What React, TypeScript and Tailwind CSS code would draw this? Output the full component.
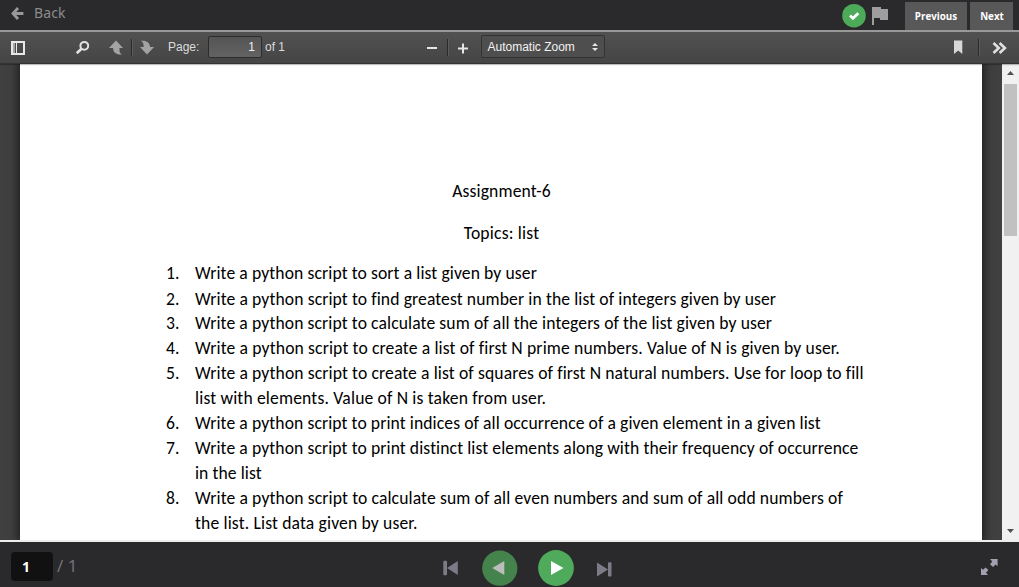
import React from 'react';

type Line = { text: string; cls: string };
type Item = { n: number; lines: Line[] };

const items: Item[] = [
  { n: 1, lines: [{ text: 'Write a python script to sort a list given by user', cls: 'h-[26px] tracking-[0.1px]' }] },
  { n: 2, lines: [{ text: 'Write a python script to find greatest number in the list of integers given by user', cls: 'h-6 tracking-[0.11px]' }] },
  { n: 3, lines: [{ text: 'Write a python script to calculate sum of all the integers of the list given by user', cls: 'h-[25px] tracking-[0.105px]' }] },
  { n: 4, lines: [{ text: 'Write a python script to create a list of first N prime numbers. Value of N is given by user.', cls: 'h-[25px] tracking-[0.138px]' }] },
  {
    n: 5,
    lines: [
      { text: 'Write a python script to create a list of squares of first N natural numbers. Use for loop to fill', cls: 'h-[25px] tracking-[0.118px]' },
      { text: 'list with elements. Value of N is taken from user.', cls: 'h-[25px] tracking-[0.16px]' },
    ],
  },
  { n: 6, lines: [{ text: 'Write a python script to print indices of all occurrence of a given element in a given list', cls: 'h-[25px] tracking-[0.095px]' }] },
  {
    n: 7,
    lines: [
      { text: 'Write a python script to print distinct list elements along with their frequency of occurrence', cls: 'h-[25px] tracking-[0.097px]' },
      { text: 'in the list', cls: 'h-[25px] tracking-[0.08px]' },
    ],
  },
  {
    n: 8,
    lines: [
      { text: 'Write a python script to calculate sum of all even numbers and sum of all odd numbers of', cls: 'h-[25px] tracking-[0.12px]' },
      { text: 'the list. List data given by user.', cls: 'h-[25px] tracking-[0.15px]' },
    ],
  },
];

function Separator() {
  return <div className="h-[17px] w-0.5 border-l border-r border-l-[#2a2a2a] border-r-[#5c5c5c]" />;
}

function TopBar() {
  return (
    <header className="flex h-[30px] shrink-0 items-start justify-between bg-[#2a2a2c]">
      <button className="flex h-[27px] items-center pl-[11px] text-[14px] text-[#8c8c8c]">
        <svg width="13" height="13" viewBox="0 0 13 13" fill="none" stroke="#999" strokeWidth="2.8">
          <path d="M7 1 L2 6.5 L7 12 M2.5 6.5 H12.4" />
        </svg>
        <span className="-mt-0.5 ml-[10px] font-['Noto_Sans',sans-serif] tracking-[0.1px]">Back</span>
      </button>
      <div className="flex items-start">
        <svg className="mt-[3px]" width="25" height="25" viewBox="0 0 25 25">
          <circle cx="12" cy="12.7" r="11.8" fill="#4caa59" />
          <path d="M8 12.6 L10.9 15.3 L16.3 10.2" fill="none" stroke="#fff" strokeWidth="2.8" />
        </svg>
        <svg className="mt-[7px] ml-[5px]" width="17" height="18" viewBox="0 0 17 18">
          <path d="M0 0 H9 V2 H16 V13 H8 V11 H2 V18 H0 Z" fill="#9e9e9e" />
        </svg>
        <button className="mt-0.5 ml-4 h-7 w-[62px] bg-[#585858] pt-0.5 font-['Open_Sans',sans-serif] text-[9.8px] font-bold text-white">Previous</button>
        <button className="mt-0.5 mr-[6px] ml-[3px] h-7 w-[43px] bg-[#585858] pt-0.5 pl-px font-['Open_Sans',sans-serif] text-[9.8px] font-bold text-white">Next</button>
      </div>
    </header>
  );
}

function Toolbar() {
  return (
    <div className="z-10 flex h-8 shrink-0 items-center border-b border-[#333] bg-linear-to-b from-[#515151] to-[#454545] font-['Liberation_Sans',sans-serif] text-[12px] text-[#dcdcdc] shadow-[0_1px_1px_rgba(0,0,0,0.25)]">
      <svg className="ml-[11px]" width="14" height="14" viewBox="0 0 14 14">
        <path fillRule="evenodd" fill="#e8e8e8" d="M0 0H14V14H0Z M2 2V12H12V2Z" />
        <path d="M2 2H4V12H2Z" fill="#a4a4a4" />
        <path d="M5 2H6V12H5Z" fill="#e8e8e8" />
      </svg>
      <svg className="ml-[50px]" width="15" height="15" viewBox="0 0 15 15" fill="none" stroke="#e2e2e2">
        <circle cx="9.3" cy="5.8" r="3.9" strokeWidth="2" />
        <path d="M6.5 8.7 L1.7 13.2" strokeWidth="2.6" />
      </svg>
      <svg className="ml-[19px]" width="15" height="15" viewBox="0 0 15 15" fill="#a3a3a3">
        <path d="M7 0.5 L14 8 H10.5 V10 C10.5 12 11.1 13.4 12.8 14.4 C8 15 4.3 13 4 8 H0 Z" />
      </svg>
      <div className="ml-[7px]"><Separator /></div>
      <svg className="ml-[6px]" width="16" height="15" viewBox="0 0 16 15" fill="#a3a3a3">
        <path d="M8 14.5 L15.1 7 H11.1 C10.9 2.5 7.3 0 1.6 0.8 C3.7 1.8 4.6 3.4 4.6 5.3 V7 H1 Z" />
      </svg>
      <span className="-mt-0.5 ml-[13px] w-8">Page:</span>
      <div className="-mt-0.5 ml-[8px] flex h-[22px] w-[54px] items-center justify-end rounded-[2px] border border-[#2c2c2c] bg-linear-to-b from-[#545454] to-[#636363] pr-[6px] text-[#f0f0f0]">1</div>
      <span className="-mt-0.5 ml-[3px] w-[21px] whitespace-nowrap">of 1</span>
      <div className="mt-px ml-[141px] h-0.5 w-[10px] bg-[#e6e6e6]" />
      <div className="ml-[10px]"><Separator /></div>
      <svg className="mt-px ml-[9px]" width="11" height="11" viewBox="0 0 11 11">
        <path d="M4 0.5H6V4.5H10V6.5H6V10.5H4V6.5H0V4.5H4Z" fill="#e6e6e6" />
      </svg>
      <div className="-mt-[2px] ml-[12px] flex h-[23px] w-[124px] items-center justify-between rounded-[2px] border border-[#333] bg-[#4e4e4e] pr-[6px] pl-[5.5px] text-[#f2f2f2]">
        <span className="pt-px leading-4">Automatic Zoom</span>
        <svg className="mt-px" width="6" height="8" viewBox="0 0 6 8" fill="#e6e6e6">
          <path d="M3 0L6 3H0Z M0 5H6L3 8Z" />
        </svg>
      </div>
      <svg className="ml-auto" width="9" height="15" viewBox="0 0 9 15">
        <path d="M0 0.5H8.3V14L4.2 10.5L0 14Z" fill="#d8d8d8" />
      </svg>
      <div className="ml-[15px]"><Separator /></div>
      <svg className="mr-[12px] ml-[12px]" width="15" height="12" viewBox="0 0 15 12" fill="none" stroke="#e0e0e0" strokeWidth="2.6">
        <path d="M1.5 1L6.8 6L1.5 11 M7.6 1L12.9 6L7.6 11" />
      </svg>
    </div>
  );
}

function PdfPage() {
  return (
    <article className="ml-5 w-[962px] overflow-hidden bg-white pt-[115px] font-['Carlito','Lato',sans-serif] text-[17.6px] leading-[25px] whitespace-nowrap text-black shadow-[0_0_9px_2px_rgba(0,0,0,0.6)] [font-variant-ligatures:none]">
      <h1 className="h-[42px] w-[963px] text-center tracking-[0.12px]">Assignment-6</h1>
      <h2 className="h-[40px] w-[963px] text-center tracking-[0.2px]">Topics: list</h2>
      <ol>
        {items.map((item) => (
          <li key={item.n} className="flex">
            <span className="ml-[146px] h-0 w-[29px] shrink-0">{item.n}.</span>
            <div>
              {item.lines.map((line) => (
                <p key={line.text} className={line.cls}>{line.text}</p>
              ))}
            </div>
          </li>
        ))}
      </ol>
    </article>
  );
}

function Scrollbar() {
  return (
    <div className="flex w-[17px] shrink-0 flex-col items-center bg-[#f1f1f1]">
      <svg width="17" height="20" viewBox="0 0 17 20"><path d="M5 11H12L8.5 7Z" fill="#505050" /></svg>
      <div className="h-[152px] w-[13px] bg-[#c1c1c1]" />
      <svg className="mt-auto" width="17" height="17" viewBox="0 0 17 17"><path d="M5 6H12L8.5 10Z" fill="#505050" /></svg>
    </div>
  );
}

function PlayerBar() {
  return (
    <footer className="flex h-[45px] shrink-0 items-start bg-[#2a2a2c] font-['Open_Sans',sans-serif]">
      <div className="mt-[10px] ml-[11px] flex h-[29px] w-[42px] items-center rounded-[4px] bg-[#111] pl-[11px] text-[14px] font-bold text-white">1</div>
      <span className="mt-[11px] ml-[4px] w-[21px] text-[17px] leading-[26px] whitespace-nowrap text-[#77757f]">/ 1</span>
      <svg className="mt-[18px] ml-[365px]" width="16" height="16" viewBox="0 0 16 16" fill="#7d7b87">
        <path d="M0.3 1.8Q0.3 0.8 1.3 0.8H3.2Q4 0.8 4 1.8V14.2Q4 15.2 3 15.2H1.3Q0.3 15.2 0.3 14.2Z M14.8 1V15L4 8Z" />
      </svg>
      <svg className="mt-[8px] ml-[23px]" width="36" height="36" viewBox="0 0 36 36">
        <circle cx="17.8" cy="18.2" r="17.6" fill="#45834d" />
        <path d="M10.3 18L22.3 11V25Z" fill="#bcbcbc" />
      </svg>
      <svg className="mt-[8px] ml-[20px]" width="36" height="36" viewBox="0 0 36 36">
        <circle cx="18" cy="18" r="17.9" fill="#4fab5b" />
        <path d="M13 11V25L25.5 18Z" fill="#fff" />
      </svg>
      <svg className="mt-[20px] ml-[23px]" width="15" height="15" viewBox="0 0 15 15" fill="#7d7b87">
        <path d="M11 1Q11 0.2 12 0.2H13.6Q14.5 0.2 14.5 1V13.6Q14.5 14.5 13.6 14.5H12Q11 14.5 11 13.6Z M0 0.5V14.5L11 7.5Z" />
      </svg>
      <svg className="mt-[16px] mr-[20px] ml-auto" width="19" height="18" viewBox="0 0 19 18" fill="#a3a0b0">
        <path d="M10 1H17.6V8.3L15.6 6.5L13 9L10 6.2L12.3 3.5Z M8 17H1V10L3 11.8L5.6 9.6L8.4 12L6 14.8Z" />
      </svg>
    </footer>
  );
}

export default function App() {
  return (
    <div className="flex h-[587px] w-[1019px] flex-col overflow-hidden">
      <TopBar />
      <div className="h-0.5 shrink-0 bg-[#999]" />
      <Toolbar />
      <main className="flex h-[476px] shrink-0 bg-[#404040]">
        <div className="flex flex-1 overflow-hidden"><PdfPage /></div>
        <Scrollbar />
      </main>
      <div className="h-0.5 shrink-0 bg-[#eee]" />
      <PlayerBar />
    </div>
  );
}
